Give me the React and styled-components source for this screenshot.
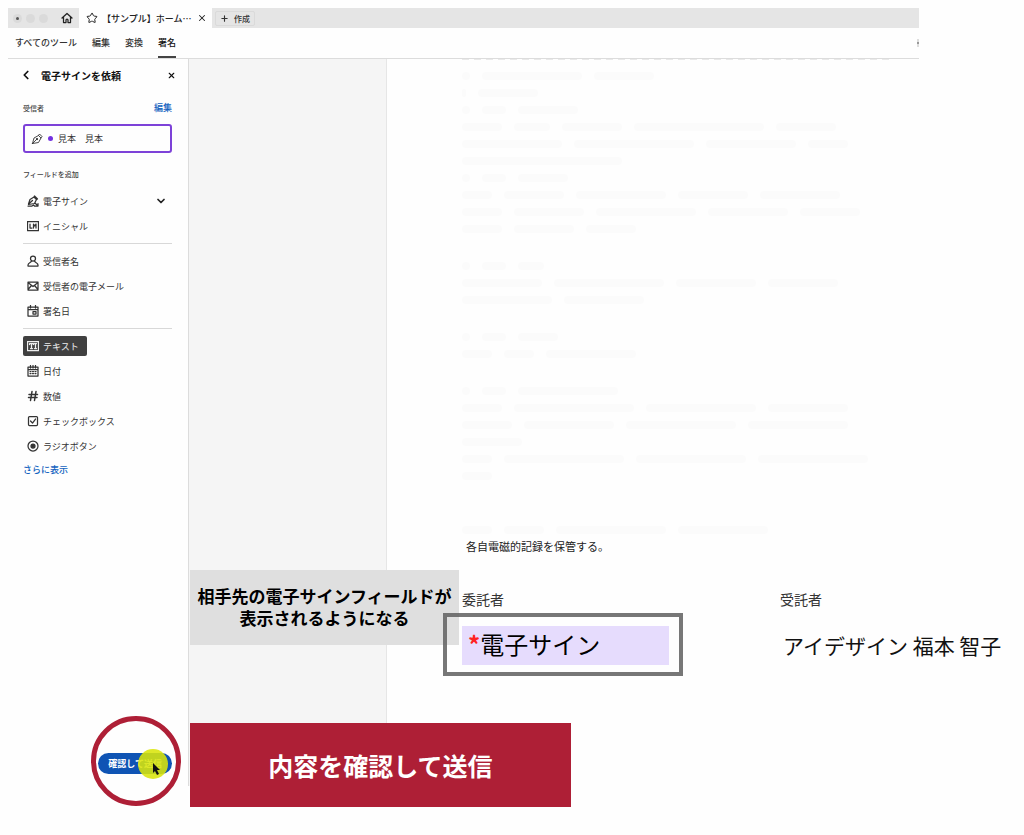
import React from "react";
import styled, { createGlobalStyle } from "styled-components";
import { ChevronDown, ChevronLeft, Plus, Star, X } from "lucide-react";

const GlobalStyle = createGlobalStyle`
  * {
    box-sizing: border-box;
  }
  body {
    margin: 0;
    background-color: #fefefe;
    color: #333;
    font-family: "Noto Sans CJK JP", sans-serif;
    font-size: 9px;
  }
  button {
    border: none;
    padding: 0;
    background: none;
    color: inherit;
    font: inherit;
    white-space: nowrap;
  }
  a {
    text-decoration: none;
  }
  svg {
    flex: none;
    display: block;
  }
`;

const Page = styled.div`
  min-height: 100vh;
  padding: 8px 0 0 8px;
`;

const Header = styled.header`
  margin-right: 105px;
`;

const TabBar = styled.div`
  display: flex;
  align-items: center;
  height: 20px;
  background-color: #e5e5e5;
`;

const WindowButtons = styled.div`
  display: flex;
  gap: 4px;
  padding: 0 13px 0 5px;
`;

const Light = styled.span`
  display: flex;
  align-items: center;
  justify-content: center;
  width: 9px;
  height: 9px;
  border-radius: 50%;
  background-color: #dadada;
  &::after {
    content: "";
    width: 3px;
    height: 3px;
    border-radius: 50%;
    background-color: ${({ $active }) => ($active ? "#555" : "transparent")};
  }
`;

const HomeBtn = styled.button`
  color: #222;
  padding-right: 6px;
`;

const Tab = styled.div`
  display: flex;
  align-items: center;
  align-self: stretch;
  gap: 4px;
  width: 133px;
  padding: 0 5px 0 7px;
  background-color: #fefefe;
  color: #222;
  font-weight: 500;
  white-space: nowrap;
`;

const TabTitle = styled.span`
  flex: 1;
`;

const CreateBtn = styled.button`
  display: flex;
  align-items: center;
  gap: 5px;
  height: 15px;
  margin-left: 3px;
  padding: 0 4px;
  border: 1px solid #dadada;
  border-radius: 2px;
  font-size: 8px;
  font-weight: 500;
`;

const Nav = styled.nav`
  display: flex;
  align-items: stretch;
  gap: 15px;
  height: 31px;
  padding-left: 7px;
  border-bottom: 1px solid #dcdcdc;
`;

const NavLink = styled.a`
  display: flex;
  align-items: center;
  border-bottom: 2px solid ${({ $active }) => ($active ? "#444" : "transparent")};
  color: ${({ $active }) => ($active ? "#111" : "#333")};
  font-weight: 500;
`;

const MoreMark = styled.span`
  align-self: center;
  width: 2px;
  height: 8px;
  margin-left: auto;
  border: solid #ddd;
  border-width: 3px 0;
  background-color: #999;
`;

const Body = styled.div`
  display: flex;
  min-height: calc(100vh - 108px);
`;

const Sidebar = styled.aside`
  display: flex;
  flex-direction: column;
  flex: none;
  width: 181px;
  padding: 6px 16px 12px 15px;
  border-right: 1px solid #dcdcdc;
`;

const Row = styled.div`
  display: flex;
  align-items: center;
  justify-content: space-between;
  height: 20px;
`;

const TitleRow = styled(Row)`
  justify-content: flex-start;
  margin-bottom: 13px;
  color: #111;
`;

const BackBtn = styled.button`
  margin-left: -4px;
`;

const CloseBtn = styled.button`
  margin-left: auto;
  margin-right: -4px;
`;

const Title = styled.h1`
  margin: 0 0 0 8px;
  font-size: 10px;
  font-weight: 700;
`;

const Label = styled.h2`
  margin: 0;
  color: #444;
  font-size: 7px;
  font-weight: 500;
  line-height: 20px;
`;

const BlueLink = styled.a`
  color: #1463c0;
  font-weight: 500;
  line-height: 20px;
`;

const Recipient = styled.button`
  display: flex;
  align-items: center;
  gap: 5px;
  height: 29px;
  margin: 6px 0 11px;
  padding: 0 6px;
  border: 2px solid #7d42d8;
  border-radius: 3px;
`;

const Dot = styled.span`
  width: 5px;
  height: 5px;
  border-radius: 50%;
  background-color: #7331e0;
`;

const FieldList = styled.ul`
  display: flex;
  flex-direction: column;
  gap: 5px;
  margin: 0;
  padding: 7px 0;
  list-style: none;
  & + & {
    border-top: 1px solid #d8d8d8;
  }
`;

const FieldItem = styled.li`
  display: flex;
  align-items: center;
  justify-content: space-between;
  padding-right: 5px;
  color: #222;
`;

const FieldBtn = styled.button`
  display: flex;
  align-items: center;
  gap: 4px;
  height: 20px;
  padding: 0 8px 0 4px;
  border-radius: 2px;
  background-color: ${({ $selected }) => ($selected ? "#404040" : "transparent")};
  color: ${({ $selected }) => ($selected ? "#eee" : "#333")};
`;

const MoreLink = styled(BlueLink)`
  margin-top: -3px;
`;

const SendArea = styled.div`
  position: relative;
  align-self: flex-end;
  margin-top: auto;
`;

const SendBtn = styled.button`
  display: block;
  height: 21px;
  padding: 0 10px;
  border-radius: 11px;
  background-color: #0f54b4;
  color: #fff;
  font-weight: 700;
`;

const Ring = styled.span`
  position: absolute;
  top: -37px;
  left: -7px;
  width: 90px;
  height: 90px;
  border: 5px solid #ae1f36;
  border-radius: 50%;
`;

const Pointer = styled.span`
  position: absolute;
  top: -4px;
  left: 40px;
  width: 30px;
  height: 30px;
  padding: 14px 0 0 14px;
  border-radius: 50%;
  background-color: rgba(217, 229, 10, 0.88);
`;

const Pane = styled.div`
  position: relative;
  flex: none;
  width: 198px;
  border-right: 1px solid #e6e6e6;
  background-color: #f5f5f5;
`;

const Note = styled.p`
  position: absolute;
  top: 511px;
  left: 1px;
  width: 269px;
  margin: 0;
  padding: 15px 0 16px;
  background-color: #dfdfdf;
  color: #000;
  font-size: 17px;
  font-weight: 700;
  line-height: 22px;
  text-align: center;
  white-space: nowrap;
`;

const Banner = styled.p`
  position: absolute;
  top: 664px;
  left: 1px;
  width: 381px;
  margin: 0;
  background-color: #ae1f36;
  color: #fff;
  font-size: 25px;
  font-weight: 700;
  line-height: 84px;
  text-align: center;
`;

const Document = styled.main`
  flex: 1;
  min-width: 0;
  padding-left: 75px;
`;

const CutLine = styled.div`
  height: 1px;
  max-width: 430px;
  margin-bottom: 7px;
  background: repeating-linear-gradient(90deg, #e9e9e9 0 7px, #fefefe 7px 12px);
`;

const Faded = styled.div`
  display: flex;
  flex-direction: column;
  gap: 20px;
`;

const FadedLine = styled.div`
  display: flex;
  align-items: center;
  gap: 12px;
  height: 17px;
`;

const Stroke = styled.span`
  height: 8px;
  border-radius: 4px;
  background-color: #fbfbfb;
`;

const Closing = styled.p`
  margin: 0 0 35px 4px;
  color: #222;
  font-family: "Liberation Serif", "Noto Sans CJK JP", serif;
  font-size: 11px;
  line-height: 18px;
`;

const Parties = styled.div`
  display: grid;
  grid-template-columns: 318px 1fr;
  row-gap: 15px;
  align-items: center;
  color: #111;
`;

const PartyLabel = styled.span`
  color: #333;
  font-family: "Liberation Serif", "Noto Sans CJK JP", serif;
  font-size: 14px;
  line-height: 20px;
`;

const SignField = styled.button`
  position: relative;
  width: 207px;
  height: 39px;
  padding: 0 0 3px 6px;
  background-color: #e6dcfd;
  color: #000;
  font-size: 24px;
  line-height: 36px;
  text-align: left;
  &::after {
    content: "";
    position: absolute;
    inset: -13px -14px -11px -19px;
    border: 4px solid rgba(100, 100, 100, 0.88);
  }
`;

const Required = styled.span`
  color: #f22;
  font-weight: 700;
`;

const PartyName = styled.span`
  padding-left: 3px;
  font-size: 21px;
  line-height: 39px;
  white-space: nowrap;
`;

const Icon = ({ size = 12, children }) => (
  <svg
    width={size}
    height={size}
    viewBox="0 0 24 24"
    fill="none"
    stroke="currentColor"
    strokeWidth="2.5"
    strokeLinecap="round"
    strokeLinejoin="round"
    aria-hidden="true"
  >
    {children}
  </svg>
);

const HomeIcon = () => (
  <Icon>
    <path d="M2 12 12 3l10 9M5 10v11h5v-5a2 2 0 0 1 4 0v5h5V10" />
  </Icon>
);

const PenIcon = () => (
  <Icon>
    <path d="M3 21 6 10l9-5 5 5-5 9-12 2zM15 5l2-3 5 5-2 3M3 21l8-8" strokeWidth="1.8" />
    <circle cx="12" cy="12" r="1" />
  </Icon>
);

const SignIcon = () => (
  <Icon>
    <path d="M3 18 6 9l8-5 5 5-4 8-12 2zM14 4l1-2 6 6-2 1M3 18l8-7" />
    <path d="M2 22h8l3-2 2 2h3M17 17l5 5M22 17v5h-4" />
  </Icon>
);

const InitialIcon = () => (
  <Icon>
    <path d="M1 3h22v18H1zM6 8v8h4M13 16V8l2.500 4L18 8v8" />
  </Icon>
);

const UserIcon = () => (
  <Icon>
    <circle cx="12" cy="7" r="5" />
    <path d="M9 12c0 3-7 3-7 8v2h20v-2c0-5-7-5-7-8" />
  </Icon>
);

const MailIcon = () => (
  <Icon>
    <path d="M2 4h20v16H2zM2 5l10 8L22 5M2 19l7-8M22 19l-7-8" />
  </Icon>
);

const SignDateIcon = () => (
  <Icon>
    <path d="M2 4h20v18H2zM2 9h20M7 1v5M17 1v5" />
    <path d="M12 13h6v5h-6z" />
  </Icon>
);

const TextIcon = () => (
  <Icon>
    <path d="M1 3h22v18H1zM5 9V7h8v2M9 7v10M7 17h4M15 7h4M17 7v10M15 17h4" />
  </Icon>
);

const CalendarIcon = () => (
  <Icon>
    <path d="M2 4h20v18H2zM2 9h20M7 1v5M12 1v5M17 1v5" />
    <path d="M6 13h2M11 13h2M16 13h2M6 17h2M11 17h2M16 17h2" />
  </Icon>
);

const NumberIcon = () => (
  <Icon>
    <path d="M10 3 7 21M18 3l-3 18M4 9h17M3 15h17" strokeWidth="3" />
  </Icon>
);

const CheckIcon = () => (
  <Icon>
    <rect x="3" y="3" width="18" height="18" rx="2" />
    <path d="m7 12 4 4 6-8" />
  </Icon>
);

const RadioIcon = () => (
  <Icon>
    <circle cx="12" cy="12" r="10" />
    <circle cx="12" cy="12" r="4" fill="currentColor" />
  </Icon>
);

const fieldGroups = [
  [
    { name: "電子サイン", icon: <SignIcon />, menu: true },
    { name: "イニシャル", icon: <InitialIcon /> },
  ],
  [
    { name: "受信者名", icon: <UserIcon /> },
    { name: "受信者の電子メール", icon: <MailIcon /> },
    { name: "署名日", icon: <SignDateIcon /> },
  ],
  [
    { name: "テキスト", icon: <TextIcon />, selected: true },
    { name: "日付", icon: <CalendarIcon /> },
    { name: "数値", icon: <NumberIcon /> },
    { name: "チェックボックス", icon: <CheckIcon /> },
    { name: "ラジオボタン", icon: <RadioIcon /> },
  ],
];

const navItems = ["すべてのツール", "編集", "変換", "署名"];

// stroke widths of each faded line, section by section
const fadedSections = [
  [
    [8, 100, 60],
    [4, 60],
    [8, 24, 60],
    [40, 36, 60, 130, 60],
    [100, 120, 90, 40],
    [160],
    [8, 24, 50],
    [30, 60, 90, 70, 80],
    [40, 70, 100, 80, 60],
    [40, 60, 50],
  ],
  [[8, 24, 26], [80, 110, 80, 70], [90, 80]],
  [[8, 24, 40], [30, 30, 90]],
  [[8, 24, 100], [40, 120, 110, 80], [50, 90, 110, 100], [60], [30, 120, 110, 110], [30]],
  [[], [30, 40, 110, 90]],
];

const FieldGroup = ({ fields }) => (
  <FieldList>
    {fields.map(({ name, icon, selected, menu }) => (
      <FieldItem key={name}>
        <FieldBtn type="button" $selected={selected}>
          {icon}
          {name}
        </FieldBtn>
        {menu && <ChevronDown size={12} strokeWidth={3.5} />}
      </FieldItem>
    ))}
  </FieldList>
);

const App = () => {
  return (
    <>
      <GlobalStyle />
      <Page lang="ja">
        <Header>
          <TabBar>
            <WindowButtons>
              <Light $active />
              <Light />
              <Light />
            </WindowButtons>
            <HomeBtn type="button" aria-label="ホーム">
              <HomeIcon />
            </HomeBtn>
            <Tab>
              <Star size={12} strokeWidth={2} />
              <TabTitle>【サンプル】ホーム⋯</TabTitle>
              <X size={10} strokeWidth={2.5} />
            </Tab>
            <CreateBtn type="button">
              <Plus size={9} strokeWidth={3} />
              作成
            </CreateBtn>
          </TabBar>
          <Nav>
            {navItems.map((item) => (
              <NavLink href="#" key={item} $active={item === "署名"}>
                {item}
              </NavLink>
            ))}
            <MoreMark />
          </Nav>
        </Header>
        <Body>
          <Sidebar>
            <TitleRow>
              <BackBtn type="button" aria-label="戻る">
                <ChevronLeft size={14} strokeWidth={3} />
              </BackBtn>
              <Title>電子サインを依頼</Title>
              <CloseBtn type="button" aria-label="閉じる">
                <X size={9} strokeWidth={3} />
              </CloseBtn>
            </TitleRow>
            <Row>
              <Label>受信者</Label>
              <BlueLink href="#">編集</BlueLink>
            </Row>
            <Recipient type="button">
              <PenIcon />
              <Dot />
              見本　見本
            </Recipient>
            <Label>フィールドを追加</Label>
            {fieldGroups.map((fields) => (
              <FieldGroup key={fields[0].name} fields={fields} />
            ))}
            <MoreLink href="#">さらに表示</MoreLink>
            <SendArea>
              <SendBtn type="button">確認して送信</SendBtn>
              <Ring />
              <Pointer>
                <svg width="9" height="13" viewBox="0 0 9 13" aria-hidden="true">
                  <path d="M1 0v10l2-2 2 4 2-1-2-4h3z" fill="#111" />
                </svg>
              </Pointer>
            </SendArea>
          </Sidebar>
          <Pane>
            <Note>
              相手先の電子サインフィールドが
              <br />
              表示されるようになる
            </Note>
            <Banner>内容を確認して送信</Banner>
          </Pane>
          <Document>
            <CutLine />
            <Faded aria-hidden="true">
              {fadedSections.map((lines, i) => (
                <div key={i}>
                  {lines.map((strokes, j) => (
                    <FadedLine key={j}>
                      {strokes.map((width, k) => (
                        <Stroke key={k} style={{ width }} />
                      ))}
                    </FadedLine>
                  ))}
                </div>
              ))}
            </Faded>
            <Closing>各自電磁的記録を保管する。</Closing>
            <Parties>
              <PartyLabel>委託者</PartyLabel>
              <PartyLabel>受託者</PartyLabel>
              <SignField type="button">
                <Required>*</Required>電子サイン
              </SignField>
              <PartyName>アイデザイン 福本 智子</PartyName>
            </Parties>
          </Document>
        </Body>
      </Page>
    </>
  );
};

export default App;
